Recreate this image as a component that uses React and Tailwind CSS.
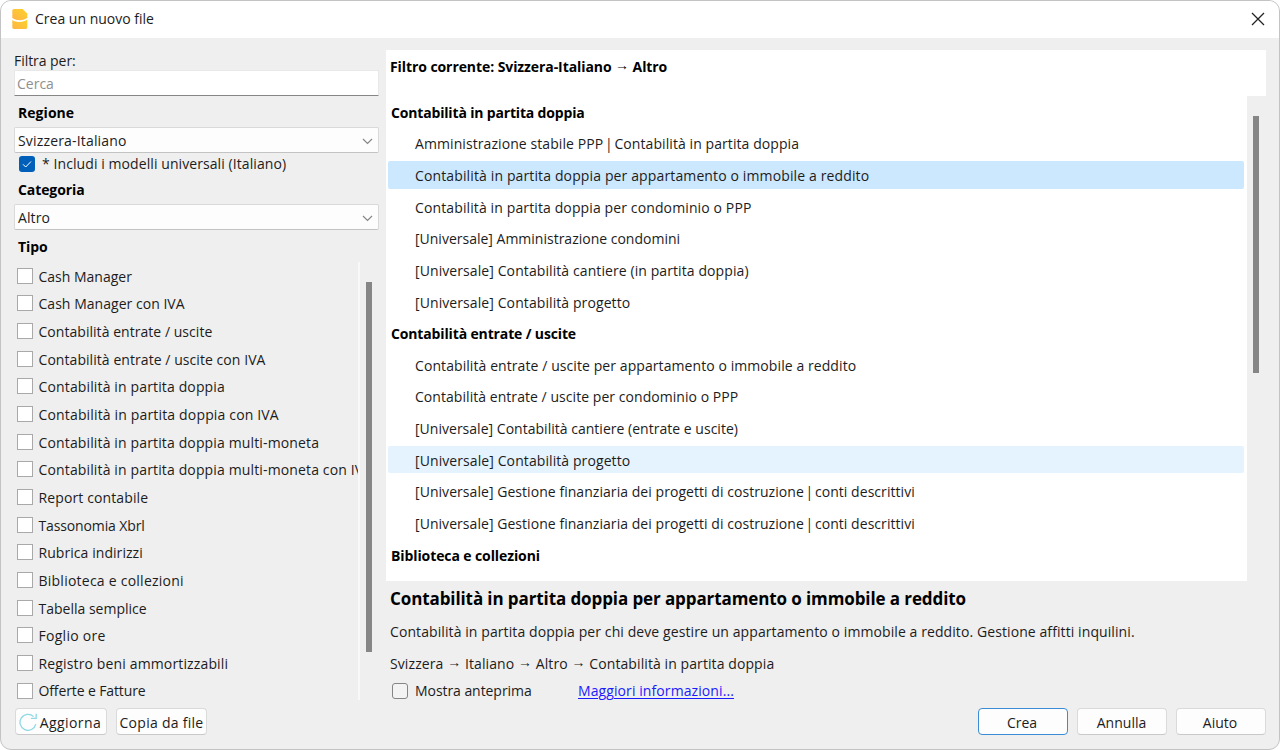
import React from "react";

const types = [
  { text: "Cash Manager", track: "" },
  { text: "Cash Manager con IVA", track: "tracking-[0.03px]" },
  { text: "Contabilità entrate / uscite", track: "tracking-[0.04px]" },
  { text: "Contabilità entrate / uscite con IVA", track: "tracking-[0.06px]" },
  { text: "Contabilità in partita doppia", track: "tracking-[0.14px]" },
  { text: "Contabilità in partita doppia con IVA", track: "tracking-[0.16px]" },
  { text: "Contabilità in partita doppia multi-moneta", track: "tracking-[0.14px]" },
  { text: "Contabilità in partita doppia multi-moneta con IVA", track: "tracking-[0.14px]" },
  { text: "Report contabile", track: "tracking-[0.12px]" },
  { text: "Tassonomia Xbrl", track: "tracking-[-0.13px]" },
  { text: "Rubrica indirizzi", track: "tracking-[0.06px]" },
  { text: "Biblioteca e collezioni", track: "tracking-[0.24px]" },
  { text: "Tabella semplice", track: "" },
  { text: "Foglio ore", track: "tracking-[0.28px]" },
  { text: "Registro beni ammortizzabili", track: "tracking-[0.14px]" },
  { text: "Offerte e Fatture", track: "tracking-[-0.12px]" },
];

const templates = [
  { text: "Contabilità in partita doppia", heading: true, track: "tracking-[-0.17px]" },
  { text: "Amministrazione stabile PPP | Contabilità in partita doppia", track: "tracking-[0.08px]" },
  { text: "Contabilità in partita doppia per appartamento o immobile a reddito", state: "selected", track: "tracking-[0.13px]" },
  { text: "Contabilità in partita doppia per condominio o PPP", track: "tracking-[0.12px]" },
  { text: "[Universale] Amministrazione condomini", track: "" },
  { text: "[Universale] Contabilità cantiere (in partita doppia)", track: "tracking-[0.09px]" },
  { text: "[Universale] Contabilità progetto", track: "tracking-[0.09px]" },
  { text: "Contabilità entrate / uscite", heading: true, track: "tracking-[-0.14px]" },
  { text: "Contabilità entrate / uscite per appartamento o immobile a reddito", track: "tracking-[0.08px]" },
  { text: "Contabilità entrate / uscite per condominio o PPP", track: "tracking-[0.05px]" },
  { text: "[Universale] Contabilità cantiere (entrate e uscite)", track: "tracking-[0.02px]" },
  { text: "[Universale] Contabilità progetto", state: "hover", track: "tracking-[0.09px]" },
  { text: "[Universale] Gestione finanziaria dei progetti di costruzione | conti descrittivi", track: "tracking-[0.05px]" },
  { text: "[Universale] Gestione finanziaria dei progetti di costruzione | conti descrittivi", track: "tracking-[0.05px]" },
  { text: "Biblioteca e collezioni", heading: true, track: "tracking-[-0.1px]" },
];

function FileLogo() {
  return (
    <svg className="h-5 w-4" viewBox="0 0 16 20">
      <defs>
        <linearGradient id="logo" x1="0" y1="1" x2="1" y2="0">
          <stop offset="0" stopColor="#ffb347" />
          <stop offset="1" stopColor="#fdd32a" />
        </linearGradient>
      </defs>
      <path d="M1.8 0H10.6L15.3 4.4V8.8C12 12 4.5 12 .3 9V1.5Q.3 0 1.8 0Z" fill="url(#logo)" />
      <path d="M.3 10.9C4.5 13.8 11.8 13.6 15.3 10.6V18.3q0 1.6-1.5 1.6H1.8q-1.5 0-1.5-1.6Z" fill="url(#logo)" />
    </svg>
  );
}

function Select({ value, track }) {
  return (
    <div className="flex h-[26px] w-[365px] items-center justify-between rounded-[2px] border border-[#d9d9d9] border-b-[#c3c3c3] bg-[#fdfdfd] pt-[2px] pr-[5px] pl-[3px]">
      <span className={track}>{value}</span>
      <svg className="h-[7px] w-[11px]" viewBox="0 0 11 7" fill="none" stroke="#868686" strokeWidth="1.2">
        <path d="M1 1l4.5 4.5L10 1" />
      </svg>
    </div>
  );
}

function Button({ children, className }) {
  return (
    <button className={"flex h-[27px] items-center justify-center rounded-[4px] border bg-[#fdfdfd] pt-[2px] whitespace-nowrap " + className}>
      {children}
    </button>
  );
}

function Arrow() {
  return <span className="inline-block -translate-y-[2px]">→</span>;
}

function Label({ text, track }) {
  const [before, after] = text.split(" | ");
  if (!after) return <span className={track}>{text}</span>;
  return (
    <span className={track}>
      {before} <span className="-mx-[2px]">|</span> {after}
    </span>
  );
}

function Template({ item }) {
  if (item.heading) {
    return (
      <div className="flex h-[31.64px] items-center pt-[2px] pl-[5px] font-bold text-black">
        <Label text={item.text} track={item.track} />
      </div>
    );
  }
  const bg = item.state === "selected" ? "bg-[#cce8ff]" : item.state === "hover" ? "bg-[#e5f3ff]" : "";
  return (
    <div className="flex h-[31.64px] items-center pr-[3px] pl-[2px]">
      <div className={"flex h-[27.6px] w-full items-center rounded-[2px] pt-[2px] pl-[27px] " + bg}>
        <Label text={item.text} track={item.track} />
      </div>
    </div>
  );
}

export default function App() {
  return (
    <div className="h-[750px] w-[1280px] overflow-hidden bg-white font-['Open_Sans','Noto_Sans',sans-serif] text-[14px] leading-5 whitespace-nowrap text-[#1c1c1c]">
      <div className="flex h-full w-full flex-col overflow-hidden rounded-[11px] border border-[#c3c3c3] bg-[#efefef]">
        <header className="flex h-[37px] shrink-0 items-center justify-between bg-white pr-[14px] pb-[2px] pl-[11px]">
          <div className="flex items-center gap-[7px]">
            <FileLogo />
            <span>Crea un nuovo file</span>
          </div>
          <svg className="h-[14px] w-[14px]" viewBox="0 0 14 14" fill="none" stroke="#222" strokeWidth="1.25">
            <path d="M1 1l12 12M13 1L1 13" />
          </svg>
        </header>

        <div className="flex h-[662px] shrink-0 pl-[13px]">
          <aside className="flex w-[365px] flex-col pt-[13px]">
            <div className="h-[19px] leading-[20px] tracking-[-0.05px]">Filtra per:</div>
            <div className="flex h-[26px] items-center rounded-[1px] border border-[#e8e8e8] border-b-[#868686] bg-white pt-[2px] pl-[2px] text-[#8f8f8f]">Cerca</div>
            <div className="flex h-[31px] items-center pt-[2px] pl-1 font-bold tracking-[0.05px] text-black">Regione</div>
            <Select value="Svizzera-Italiano" track="tracking-[0.17px]" />
            <div className="flex h-[23px] items-center gap-[6px] pb-[2px] pl-[5px]">
              <svg className="h-4 w-4" viewBox="0 0 16 16" fill="none">
                <rect width="16" height="16" rx="3" fill="#005fb8" />
                <path d="M4 8.3l2.7 2.7L12 5.5" stroke="#fff" />
              </svg>
              <span className="pl-px tracking-[0.08px]">* Includi i modelli universali (Italiano)</span>
            </div>
            <div className="flex h-[28px] items-center pb-px pl-1 font-bold tracking-[-0.1px] text-black">Categoria</div>
            <Select value="Altro" track="tracking-[0.1px]" />
            <div className="flex h-[32px] items-center pt-[2px] pl-1 font-bold tracking-[-0.05px] text-black">Tipo</div>
            <div className="flex h-[438px]">
              <div className="w-[346px] overflow-hidden border-r-2 border-[#f8f8f8]">
                {types.map((t) => (
                  <div key={t.text} className="flex h-[27.67px] items-center gap-[6px] pl-[2.5px]">
                    <span className="h-4 w-4 shrink-0 border border-[#a9a9a9] bg-white" />
                    <span className={"pt-[1.6px] " + t.track}>{t.text}</span>
                  </div>
                ))}
              </div>
              <div className="mt-[20px] ml-[6px] h-[370px] w-[6px] bg-[#868686]" />
            </div>
          </aside>

          <main className="ml-[7px] flex w-[880px] shrink-0 flex-col pt-[12px]">
            <div className="h-[46px] shrink-0 bg-white pt-[7px] pl-[4px] font-bold tracking-[-0.08px] text-black">
              Filtro corrente: Svizzera-Italiano <Arrow /> Altro
            </div>
            <div className="flex h-[485px] shrink-0">
              <div className="w-[860.5px] overflow-hidden bg-white">
                {templates.map((item, i) => (
                  <Template key={i} item={item} />
                ))}
              </div>
              <div className="mt-[20px] ml-[6.5px] h-[257px] w-[6px] bg-[#868686]" />
            </div>
            <h1 className="h-[35px] shrink-0 pl-[4px] text-[17px] leading-[35px] font-bold tracking-[-0.1px] text-black">Contabilità in partita doppia per appartamento o immobile a reddito</h1>
            <p className="h-[32px] shrink-0 pl-[4px] leading-[32px] tracking-[0.09px]">Contabilità in partita doppia per chi deve gestire un appartamento o immobile a reddito. Gestione affitti inquilini.</p>
            <p className="h-[31px] shrink-0 pl-[4px] leading-[31px] tracking-[0.09px]">
              Svizzera <Arrow /> Italiano <Arrow /> Altro <Arrow /> Contabilità in partita doppia
            </p>
            <div className="flex h-[24px] shrink-0 items-center pl-[6px]">
              <span className="h-4 w-4 rounded-[3px] border border-[#858585] bg-[#f3f3f3]" />
              <span className="ml-[7px] w-[163px] tracking-[-0.06px]">Mostra anteprima</span>
              <a className="tracking-[0.09px] text-[#1a1aff] underline underline-offset-2">Maggiori informazioni...</a>
            </div>
          </main>
        </div>

        <footer className="flex items-center justify-between pt-[8px] pr-[13px] pl-[14px]">
          <div className="flex gap-[9px]">
            <Button className="w-[92px] border-[#dadada] border-b-[#c9c9c9] pr-[2px]">
              <svg className="-mt-[2px] h-[18px] w-[18px] shrink-0" viewBox="0 0 18 18" fill="none" stroke="#8fd9e4" strokeWidth="1.3">
                <path d="M16.8 11.2A8 8 0 1 1 14.6 3.6" />
                <path d="M17.2.8V5.4H12" />
              </svg>
              <span className="pl-[3px] tracking-[0.4px]">Aggiorna</span>
            </Button>
            <Button className="w-[91px] border-[#dadada] border-b-[#c9c9c9] tracking-[0.28px]">Copia da file</Button>
          </div>
          <div className="flex gap-[9px]">
            <Button className="w-[90px] border-[#3a8dd4] pr-[2px]">Crea</Button>
            <Button className="w-[90px] border-[#dadada] border-b-[#c9c9c9] pr-px">Annulla</Button>
            <Button className="w-[90px] border-[#dadada] border-b-[#c9c9c9] pr-[2px]">Aiuto</Button>
          </div>
        </footer>
      </div>
    </div>
  );
}
